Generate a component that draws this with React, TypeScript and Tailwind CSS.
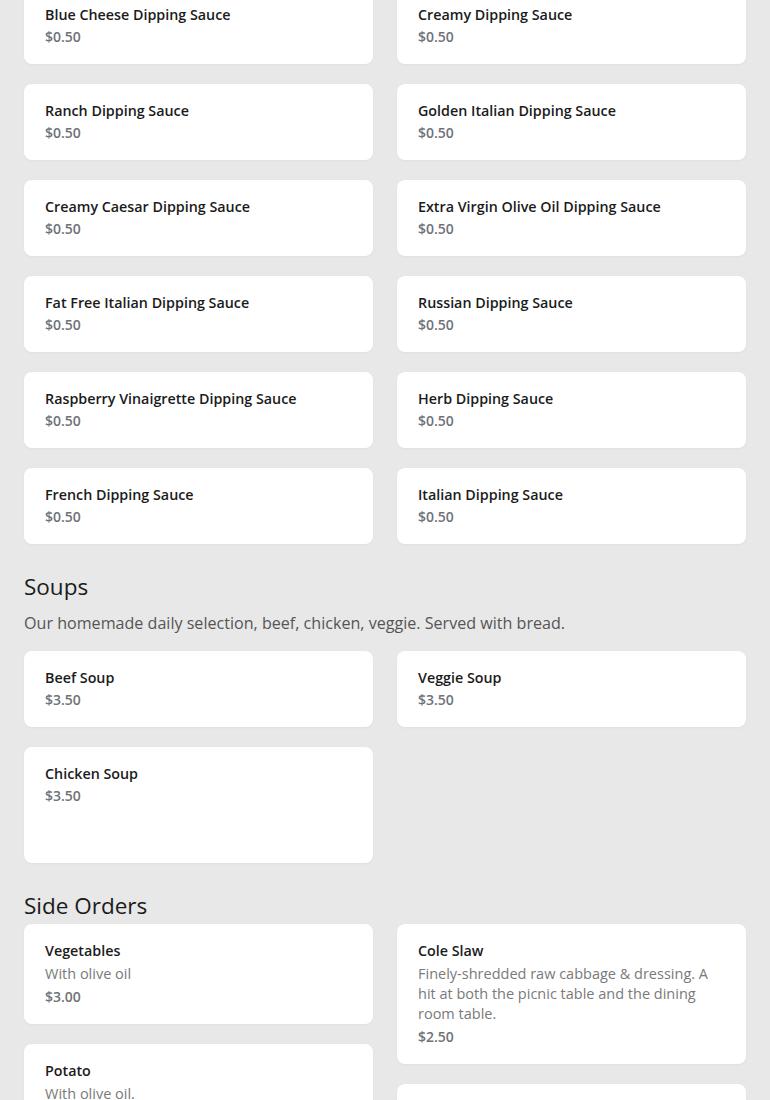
type Item = { name: string; price: string; desc?: string; tall?: boolean };

const sauces: [Item[], Item[]] = [
    [
        { name: "Blue Cheese Dipping Sauce", price: "$0.50" },
        { name: "Ranch Dipping Sauce", price: "$0.50" },
        { name: "Creamy Caesar Dipping Sauce", price: "$0.50" },
        { name: "Fat Free Italian Dipping Sauce", price: "$0.50" },
        { name: "Raspberry Vinaigrette Dipping Sauce", price: "$0.50" },
        { name: "French Dipping Sauce", price: "$0.50" }
    ],
    [
        { name: "Creamy Dipping Sauce", price: "$0.50" },
        { name: "Golden Italian Dipping Sauce", price: "$0.50" },
        { name: "Extra Virgin Olive Oil Dipping Sauce", price: "$0.50" },
        { name: "Russian Dipping Sauce", price: "$0.50" },
        { name: "Herb Dipping Sauce", price: "$0.50" },
        { name: "Italian Dipping Sauce", price: "$0.50" }
    ]
];

const soups: [Item[], Item[]] = [
    [
        { name: "Beef Soup", price: "$3.50" },
        { name: "Chicken Soup", price: "$3.50", tall: true }
    ],
    [{ name: "Veggie Soup", price: "$3.50" }]
];

const sides: [Item[], Item[]] = [
    [
        { name: "Vegetables", price: "$3.00", desc: "With olive oil" },
        { name: "Potato", price: "$3.00", desc: "With olive oil." }
    ],
    [
        {
            name: "Cole Slaw",
            price: "$2.50",
            desc: "Finely-shredded raw cabbage & dressing. A hit at both the picnic table and the dining room table."
        },
        { name: "Garden Salad", price: "$3.00", desc: "Lettuce, tomato, cucumber." }
    ]
];

function Card({ item }: { item: Item }) {
    return (
        <div
            className={`bg-white rounded-[8px] pl-[21px] pr-6 pt-[17px] pb-[17px] shadow-[0_1px_3px_rgba(0,0,0,0.04)] ${
                item.tall ? "min-h-[116px]" : ""
            }`}
        >
            <div className="text-[14.3px] leading-5 font-semibold text-[#1b1b1b]">{item.name}</div>
            {item.desc && <div className="mt-[3px] text-[14.5px] leading-5 text-[#7a7a7a]">{item.desc}</div>}
            <div className={`${item.desc ? "mt-[3px]" : "mt-[2px]"} text-[14px] leading-5 font-semibold text-[#6f7278]`}>
                {item.price}
            </div>
        </div>
    );
}

function Columns({ cols }: { cols: [Item[], Item[]] }) {
    return (
        <div className="flex gap-6 items-start">
            {cols.map((col, i) => (
                <div key={i} className="flex-1 flex flex-col gap-5">
                    {col.map((item) => (
                        <Card key={item.name} item={item} />
                    ))}
                </div>
            ))}
        </div>
    );
}

export default function App() {
    return (
        <div className="min-h-screen bg-[#e8e8e8] px-6 pb-10 overflow-hidden font-['Open_Sans',sans-serif]">
            <div className="-mt-[12px]">
                <Columns cols={sauces} />
            </div>

            <section className="mt-[25px]">
                <h2 className="text-[22.5px] leading-[36px] text-[#1b1b1b]">Soups</h2>
                <p className="mt-[6px] text-[16.1px] leading-6 text-[#555555]">
                    Our homemade daily selection, beef, chicken, veggie. Served with bread.
                </p>
                <div className="mt-4">
                    <Columns cols={soups} />
                </div>
            </section>

            <section className="mt-[25px]">
                <h2 className="text-[22.5px] leading-[36px] text-[#1b1b1b]">Side Orders</h2>
                <Columns cols={sides} />
            </section>
        </div>
    );
}
